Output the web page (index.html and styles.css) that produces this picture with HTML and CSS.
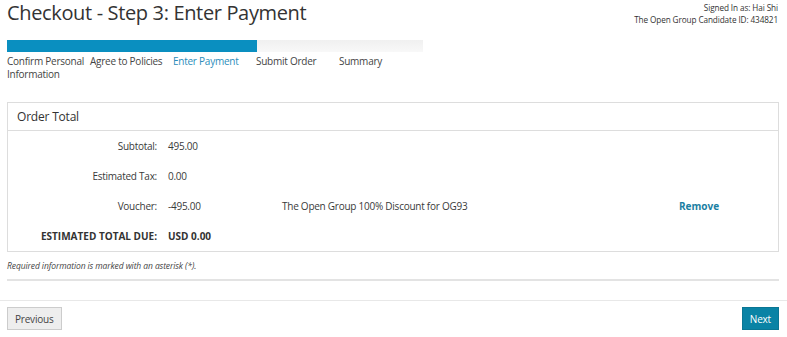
FILE: index.html
```html
<!DOCTYPE html>
<html lang="en">
<head>
    <meta charset="UTF-8">
    <title>Checkout - Step 3: Enter Payment</title>
    <link rel="stylesheet" href="styles.css">
</head>
<body>
<div class="page-header">
    <h1>Checkout - Step 3: Enter Payment</h1>
    <div class="user-info">
        <div>Signed In as: Hai Shi</div>
        <div>The Open Group Candidate ID: 434821</div>
    </div>
</div>

<div class="steps">
    <div class="progress">
        <div class="progress-fill" style="width: 60%"></div>
    </div>
    <div class="step-labels">
        <span class="step">Confirm Personal Information</span>
        <span class="step">Agree to Policies</span>
        <span class="step active">Enter Payment</span>
        <span class="step">Submit Order</span>
        <span class="step">Summary</span>
    </div>
</div>

<div class="panel">
    <div class="panel-heading">Order Total</div>
    <div class="panel-body">
        <div class="total-row">
            <span class="label">Subtotal:</span>
            <span class="value">495.00</span>
            <span class="desc"></span>
            <span></span>
        </div>
        <div class="total-row">
            <span class="label">Estimated Tax:</span>
            <span class="value">0.00</span>
            <span class="desc"></span>
            <span></span>
        </div>
        <div class="total-row">
            <span class="label">Voucher:</span>
            <span class="value">-495.00</span>
            <span class="desc">The Open Group 100% Discount for OG93</span>
            <a href="#" class="remove">Remove</a>
        </div>
        <div class="total-row grand">
            <span class="label">ESTIMATED TOTAL DUE:</span>
            <span class="value">USD 0.00</span>
            <span class="desc"></span>
            <span></span>
        </div>
    </div>
</div>

<p class="required-note">Required information is marked with an asterisk (*).</p>
<hr class="form-end">

<div class="actions">
    <button class="btn">Previous</button>
    <button class="btn btn-primary">Next</button>
</div>
</body>
</html>
```

FILE: styles.css
```css
* { box-sizing: border-box; }
body {
    margin: 0;
    font-family: "Open Sans", Arial, sans-serif;
    color: #333;
    background: #fff;
}
.page-header {
    display: flex;
    justify-content: space-between;
    align-items: flex-start;
    padding: 0 9px 0 7px;
}
.page-header h1 {
    margin: 0;
    font-size: 20px;
    font-weight: 400;
    letter-spacing: -0.35px;
    line-height: 26px;
    color: #333;
}
.user-info {
    text-align: right;
    font-size: 8.2px;
    letter-spacing: -0.1px;
    line-height: 12px;
    padding-top: 2px;
    color: #333;
}
.steps {
    width: 416px;
    margin: 14px 0 0 7px;
}
.progress {
    height: 12px;
    background: linear-gradient(#f0f0f0, #f8f8f8);
}
.progress-fill {
    height: 100%;
    background-color: #0a8fc0;
}
.step-labels {
    display: flex;
    font-size: 10px;
    letter-spacing: -0.25px;
    line-height: 12.5px;
    color: #444;
    padding-top: 3px;
}
.step {
    width: 83px;
}
.step.active {
    color: #2b8dbb;
}
.panel {
    margin: 22px 8px 0 7px;
    border: 1px solid #ddd;
}
.panel-heading {
    height: 28px;
    padding: 0 9px;
    font-size: 12px;
    letter-spacing: -0.2px;
    line-height: 27px;
    border-bottom: 1px solid #ddd;
}
.total-row {
    display: grid;
    grid-template-columns: 149px 103px 386px auto;
    column-gap: 11px;
    height: 30px;
    align-items: center;
    font-size: 10px;
    letter-spacing: -0.25px;
    color: #3a3a3a;
}
.total-row .label {
    text-align: right;
}
.total-row.grand {
    font-weight: 700;
    letter-spacing: 0;
    color: #333;
}
.remove {
    color: #1b7fa3;
    font-weight: 700;
    letter-spacing: 0;
    text-decoration: none;
}
.required-note {
    margin: 9px 0 0 7px;
    font-size: 8.5px;
    font-style: italic;
    letter-spacing: -0.1px;
    line-height: 10px;
    color: #444;
}
hr.form-end {
    margin: 8px 8px 0 7px;
    border: 0;
    border-top: 2px solid #e3e3e3;
}
.actions {
    display: flex;
    justify-content: space-between;
    margin-top: 19px;
    padding: 6px 8px 0 7px;
    border-top: 1px solid #e8e8e8;
}
.btn {
    height: 23px;
    padding: 0 7px;
    font-family: "Open Sans", Arial, sans-serif;
    font-size: 10px;
    letter-spacing: -0.2px;
    color: #444;
    background: #eee;
    border: 1px solid #ccc;
    cursor: pointer;
}
.btn-primary {
    color: #fff;
    background: #0a83a5;
    border-color: #0a7694;
}
```
